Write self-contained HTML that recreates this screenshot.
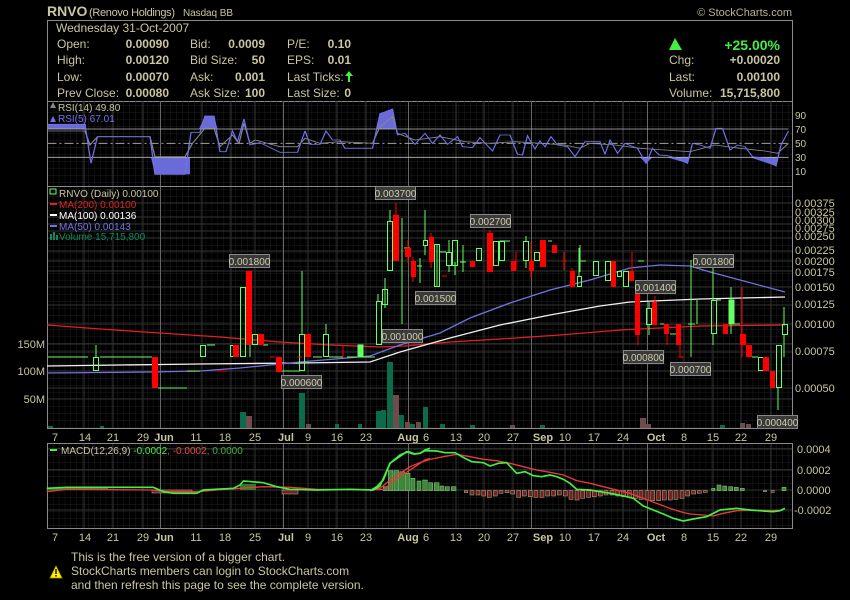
<!DOCTYPE html>
<html><head><meta charset="utf-8"><style>
html,body{margin:0;padding:0;background:#000;}
svg{display:block;font-family:"Liberation Sans",sans-serif;}
</style></head><body>
<svg width="850" height="600" viewBox="0 0 850 600" xmlns="http://www.w3.org/2000/svg">
<rect width="850" height="600" fill="#000"/>
<defs>
<pattern id="mg" x="47" y="0" width="5.88" height="7" patternUnits="userSpaceOnUse">
<path d="M0 0V7M0 0H5.88" stroke="#1d1d1d" stroke-width="1" fill="none"/>
</pattern>
</defs>

<!-- header -->
<text x="47" y="16" fill="#c9c6a0" font-size="14" font-weight="bold">RNVO</text>
<text x="89" y="16" fill="#c9c6a0" font-size="11" textLength="86">(Renovo Holdings)</text>
<text x="183" y="16" fill="#c9c6a0" font-size="10" textLength="50">Nasdaq BB</text>
<text x="792" y="16" fill="#b5b293" font-size="11" text-anchor="end">© StockCharts.com</text>
<rect x="47.5" y="20.5" width="745" height="81" fill="none" stroke="#8a8a8a"/>
<g fill="#c9c6a0" font-size="12">
<text x="56" y="32">Wednesday  31-Oct-2007</text>
<text x="57" y="48">Open:</text><text x="57" y="64">High:</text><text x="57" y="81">Low:</text><text x="57" y="97">Prev Close:</text>
<g font-weight="bold" text-anchor="end"><text x="169" y="48">0.00090</text><text x="169" y="64">0.00120</text><text x="169" y="81">0.00070</text><text x="169" y="97">0.00080</text>
<text x="265" y="48">0.0009</text><text x="265" y="64">50</text><text x="265" y="81">0.001</text><text x="265" y="97">100</text>
<text x="351" y="48">0.10</text><text x="351" y="64">0.01</text><text x="351" y="97">0</text>
<text x="780" y="64">+0.00020</text><text x="780" y="81">0.00100</text><text x="780" y="97">15,715,800</text></g>
<text x="190" y="48">Bid:</text><text x="190" y="64">Bid Size:</text><text x="190" y="81">Ask:</text><text x="190" y="97">Ask Size:</text>
<text x="287" y="48">P/E:</text><text x="287" y="64">EPS:</text><text x="287" y="81">Last Ticks:</text><text x="287" y="97">Last Size:</text>
<text x="669" y="64">Chg:</text><text x="669" y="81">Last:</text><text x="669" y="97">Volume:</text>
</g>
<path d="M349 71 L345 76 H348 V82 H350 V76 H353 Z" fill="#44ee44"/>
<path d="M669 50 L675 38 L682 50 Z" fill="#44ee44"/>
<text x="780" y="50" fill="#44ee44" font-size="14" font-weight="bold" text-anchor="end">+25.00%</text>

<!-- RSI panel -->
<rect x="47" y="101" width="745" height="85" fill="url(#mg)"/>
<g stroke="#3a3a3a"><path d="M84 101V186M113 101V186M143 101V186M202 101V186M231 101V186M255 101V186M308 101V186M337 101V186M366 101V186M456 101V186M484 101V186M513 101V186M565 101V186M594 101V186M623 101V186M684 101V186M713 101V186M741 101V186M771 101V186"/></g>
<g stroke="#666"><path d="M160.5 101V186M283.5 101V186M408.5 101V186M531.5 101V186M647.5 101V186"/></g>
<g transform="translate(40,95) scale(0.5,0.33333)">
<g fill="#6a6ad8"><path d="M15 88H92V102H15Z"/><path d="M222 187H300V238H230Z"/><path d="M318 102L330 63H348L355 102Z"/><path d="M672 102L680 56L705 42L712 102Z"/><path d="M1200 187L1212 205L1225 187Z"/><path d="M1255 187L1295 205L1300 187Z"/><path d="M1420 187L1472 213L1476 187Z"/><path d="M1347 102L1352 100H1365L1368 102Z"/></g>
<g stroke="#bbb" stroke-width="2.5" fill="none"><path d="M15 102H1497"/><path d="M15 187H1497"/><path d="M15 145H1497" stroke-dasharray="18 6 4 6"/></g>
<polyline fill="none" stroke="#888" stroke-width="2.5" points="15,108 90,108 100,150 115,125 220,125 230,185 290,185 305,145 330,100 348,100 360,155 385,120 398,145 408,85 420,145 430,135 480,155 515,155 530,130 560,145 600,140 665,145 680,95 705,65 715,115 750,135 800,125 850,140 900,145 950,140 1000,145 1050,150 1080,160 1100,145 1150,150 1200,160 1250,165 1300,170 1350,150 1400,160 1450,168 1475,175 1497,145"/>
<polyline fill="none" stroke="#7070e8" stroke-width="2.5" points="15,88 90,88 102,205 115,125 220,125 230,238 290,238 302,112 320,112 330,63 348,63 360,170 372,170 385,108 395,140 408,72 420,150 440,143 480,172 515,172 530,108 540,148 560,148 572,108 585,135 600,135 610,160 665,160 680,56 705,42 715,120 730,115 750,148 770,115 785,145 800,120 815,148 835,125 845,155 865,158 880,128 905,168 920,120 940,120 955,178 965,180 975,122 990,162 1000,138 1010,155 1022,125 1035,150 1055,155 1070,185 1090,140 1120,140 1130,178 1140,135 1155,175 1170,145 1195,160 1212,205 1225,160 1238,180 1255,182 1275,190 1295,205 1305,145 1320,150 1340,160 1352,100 1365,100 1380,165 1395,150 1410,155 1425,185 1450,190 1472,213 1482,150 1497,108"/>
</g>
<path d="M50 108L53 102L56 108Z" fill="#888"/><text x="58" y="111" fill="#c9c6a0" font-size="10">RSI(14) 49.80</text>
<path d="M50 122L53 116L56 122Z" fill="#7070e8"/><text x="58" y="122" fill="#7070e8" font-size="10">RSI(5) 67.01</text>
<g fill="#c9c6a0" font-size="10"><text x="795" y="119">90</text><text x="795" y="133">70</text><text x="795" y="147">50</text><text x="795" y="161">30</text><text x="795" y="175">10</text></g>

<!-- price panel -->
<rect x="47" y="186" width="745" height="242" fill="url(#mg)"/>
<g stroke="#333"><path d="M84 186V428M113 186V428M143 186V428M202 186V428M231 186V428M255 186V428M308 186V428M337 186V428M366 186V428M456 186V428M484 186V428M513 186V428M565 186V428M594 186V428M623 186V428M684 186V428M713 186V428M741 186V428M771 186V428"/>
<path d="M47 203H792M47 217H792M47 224H792M47 231H792M47 238H792M47 251H792M47 261H792M47 271H792M47 287H792M47 305H792M47 324H792M47 344H792M47 352H792M47 371H792M47 388H792M47 399H792"/></g>
<g stroke="#666"><path d="M160.5 186V428M283.5 186V428M408.5 186V428M531.5 186V428M647.5 186V428"/></g>
<path d="M47.5 101V428.5H792.5V101" fill="none" stroke="#8a8a8a"/>
<line x1="47" y1="186.5" x2="792" y2="186.5" stroke="#8a8a8a"/>

<!-- volume -->
<g fill="#0c6b4a"><rect x="48" y="426" width="5" height="2"/><rect x="100" y="426" width="4" height="2"/><rect x="240" y="412" width="6" height="16"/><rect x="299" y="393" width="6" height="35"/><rect x="335" y="424" width="4" height="4"/><rect x="358" y="424" width="4" height="4"/><rect x="376" y="411" width="5" height="17"/><rect x="381" y="410" width="5" height="18"/><rect x="387" y="362" width="6" height="66"/><rect x="399" y="415" width="5" height="13"/><rect x="423" y="407" width="5" height="21"/><rect x="410" y="424" width="5" height="4"/><rect x="440" y="424" width="5" height="4"/><rect x="470" y="425" width="5" height="3"/><rect x="540" y="425" width="5" height="3"/><rect x="720" y="425" width="5" height="3"/><rect x="775" y="423" width="5" height="5"/><rect x="782" y="424" width="5" height="4"/></g>
<g fill="#6e4c4c"><rect x="246" y="416" width="6" height="12"/><rect x="306" y="424" width="5" height="4"/><rect x="393" y="395" width="6" height="33"/><rect x="405" y="422" width="5" height="6"/><rect x="416" y="422" width="5" height="6"/><rect x="510" y="425" width="5" height="3"/><rect x="640" y="418" width="6" height="10"/><rect x="646" y="424" width="5" height="4"/><rect x="740" y="423" width="5" height="5"/><rect x="746" y="424" width="5" height="4"/><rect x="770" y="424" width="5" height="4"/></g>

<!-- moving averages -->
<polyline fill="none" stroke="#e02020" stroke-width="1.3" points="47,325 100,329 160,333 220,337 280,342 330,345 380,347 405,346 450,342 500,339 560,335 620,330 700,326 785,325"/>
<polyline fill="none" stroke="#f0f0f0" stroke-width="1.3" points="47,366 120,365 200,364 300,363 370,362 385,357 400,352 450,338 500,325 550,315 600,306 630,302 700,299 785,297"/>
<polyline fill="none" stroke="#7272e0" stroke-width="1.3" points="47,373 150,372 200,371 240,368 300,362 370,356 400,345 440,333 470,318 510,303 550,290 590,280 630,268 660,265 690,266 710,272 740,280 785,292"/>

<!-- candles -->
<g stroke="#66ff66" fill="none" stroke-width="1">
<path d="M48 357H88M100 357H152M158 388H187M187 371H200M207 345H215M263 345H268M282 371H300M313 357H322M329 357H343M347 357H357M363 357H375M404 248H410M417 266H422M440 252H446M460 262H466M500 241H510M548 241H552M580 261H586M638 261H644M660 324H664M670 334H676M688 324H695M716 300H721M734 324H740M752 357H758"/>
<path d="M96 345V357M96 371V371M250 345V357M302 271V334M326 324V334M378 294V301M385 278V308M390 210V221M402 218V324M420 258V283M425 210V240M425 245V255M437 244V287M449 240V252M449 266V272M455 262V275M463 245V272M526 236V241M526 261V268M580 245V272M579 248V276M649 302V308M649 325V335M691 260V357M697 300V324M713 261V300M713 334V345M731 287V300M731 324V334M778 388V410M784 307V324M784 334V357"/>
<rect x="93.5" y="357.5" width="5" height="13"/><rect x="200.5" y="345.5" width="5" height="11"/><rect x="230.5" y="345.5" width="3" height="11"/><rect x="240.5" y="287.5" width="5" height="69"/><rect x="252.5" y="334.5" width="5" height="10"/><rect x="299.5" y="334.5" width="5" height="36"/><rect x="323.5" y="334.5" width="5" height="22"/><rect x="376.5" y="301.5" width="5" height="43"/><rect x="382.5" y="289.5" width="5" height="15"/><rect x="387.5" y="221.5" width="5" height="49"/><rect x="423.5" y="240.5" width="4" height="5"/><rect x="434.5" y="244.5" width="5" height="42"/><rect x="446.5" y="252.5" width="5" height="13"/><rect x="452.5" y="240.5" width="5" height="25"/><rect x="476.5" y="248.5" width="5" height="12"/><rect x="493.5" y="241.5" width="5" height="24"/><rect x="499.5" y="241.5" width="5" height="19"/><rect x="523.5" y="241.5" width="5" height="19"/><rect x="534.5" y="252.5" width="5" height="8"/><rect x="577.5" y="276.5" width="4" height="10"/><rect x="593.5" y="261.5" width="5" height="14"/><rect x="605.5" y="261.5" width="5" height="19"/><rect x="617.5" y="271.5" width="4" height="5"/><rect x="623.5" y="271.5" width="5" height="15"/><rect x="646.5" y="308.5" width="5" height="16"/><rect x="711.5" y="300.5" width="5" height="33"/><rect x="758.5" y="357.5" width="5" height="13"/><rect x="776.5" y="345.5" width="5" height="42"/><rect x="782.5" y="324.5" width="5" height="10"/>
<rect x="358" y="345" width="5" height="12" fill="#66ff66"/><rect x="729" y="300" width="5" height="24" fill="#66ff66"/>
</g>
<g fill="#ff0000" stroke="#ff0000" stroke-width="1">
<path d="M218 371H227M270 357H275M297 357H302M343 345V357M396 203V215M408 240V263M413 257V282M431 233V268M442 276H447M473 270V270M490 230V233M516 252V270M531 242V278M562 261H567M564 252V270M572 268V271M632 252V271M638 335V345M655 296V302M667 334V345M680 345V357M679 357H684M742 287V357M745 334V345"/>
<rect x="152.5" y="357.5" width="5" height="30"/><rect x="233.5" y="345.5" width="5" height="11"/><rect x="246.5" y="271.5" width="5" height="73"/><rect x="258.5" y="334.5" width="5" height="10"/><rect x="276.5" y="357.5" width="5" height="14"/><rect x="305.5" y="334.5" width="5" height="22"/><rect x="393.5" y="215.5" width="5" height="45"/><rect x="405.5" y="248.5" width="5" height="8"/><rect x="411.5" y="261.5" width="4" height="15"/><rect x="429.5" y="237.5" width="4" height="24"/><rect x="470.5" y="261.5" width="4" height="5"/><rect x="487.5" y="233.5" width="5" height="38"/><rect x="511.5" y="261.5" width="4" height="9"/><rect x="529.5" y="261.5" width="4" height="9"/><rect x="540.5" y="240.5" width="5" height="26"/><rect x="552.5" y="245.5" width="4" height="7"/><rect x="570.5" y="271.5" width="4" height="15"/><rect x="611.5" y="261.5" width="4" height="25"/><rect x="629.5" y="271.5" width="4" height="9"/><rect x="635.5" y="288.5" width="4" height="46"/><rect x="652.5" y="302.5" width="4" height="22"/><rect x="664.5" y="324.5" width="4" height="9"/><rect x="676.5" y="324.5" width="4" height="20"/><rect x="723.5" y="324.5" width="4" height="9"/><rect x="740.5" y="334.5" width="5" height="10"/><rect x="746.5" y="345.5" width="5" height="11"/><rect x="763.5" y="357.5" width="5" height="13"/><rect x="770.5" y="371.5" width="4" height="16"/>
</g>

<!-- price tags -->
<g font-size="10" fill="#d0cda8" text-anchor="middle">
<g fill="#3a3a3a" stroke="#888" stroke-width="1"><rect x="229.5" y="254.5" width="40" height="13"/><rect x="375.5" y="186.5" width="40" height="13"/><rect x="470.5" y="214.5" width="40" height="13"/><rect x="415.5" y="291.5" width="40" height="13"/><rect x="382.5" y="329.5" width="40" height="13"/><rect x="281.5" y="375.5" width="40" height="13"/><rect x="623.5" y="350.5" width="40" height="13"/><rect x="670.5" y="362.5" width="40" height="13"/><rect x="635.5" y="280.5" width="40" height="13"/><rect x="693.5" y="254.5" width="40" height="13"/><rect x="757.5" y="415.5" width="40" height="13"/></g>
<text x="249.5" y="265">0.001800</text><text x="395.5" y="197">0.003700</text><text x="490.5" y="225">0.002700</text><text x="435.5" y="302">0.001500</text><text x="402.5" y="340">0.001000</text><text x="301.5" y="386">0.000600</text><text x="643.5" y="361">0.000800</text><text x="690.5" y="373">0.000700</text><text x="655.5" y="291">0.001400</text><text x="713.5" y="265">0.001800</text><text x="777.5" y="426">0.000400</text>
</g>

<!-- price panel legend -->
<g font-size="10">
<rect x="50" y="189" width="6" height="5" fill="none" stroke="#66ff66"/><text x="59" y="197" fill="#c9c6a0">RNVO (Daily) 0.00100</text>
<line x1="50" y1="204" x2="57" y2="204" stroke="#e02020" stroke-width="2"/><text x="59" y="208" fill="#e02020">MA(200) 0.00100</text>
<line x1="50" y1="215" x2="57" y2="215" stroke="#fff" stroke-width="2"/><text x="59" y="219" fill="#fff">MA(100) 0.00136</text>
<line x1="50" y1="226" x2="57" y2="226" stroke="#7272e0" stroke-width="2"/><text x="59" y="230" fill="#7272e0">MA(50) 0.00143</text>
<path d="M50 240V234H52V240M53 240V232H55V240M56 240V235H58V240" fill="#0c8b5a"/><text x="59" y="240" fill="#0c8b5a">Volume 15,715,800</text>
</g>
<g fill="#c9c6a0" font-size="11">
<text x="795" y="207">0.00375</text><text x="795" y="216">0.00325</text><text x="795" y="224">0.00300</text><text x="795" y="232">0.00275</text><text x="795" y="240">0.00250</text><text x="795" y="254">0.00225</text><text x="795" y="265">0.00200</text><text x="795" y="276">0.00175</text><text x="795" y="291">0.00150</text><text x="795" y="308">0.00125</text><text x="795" y="328">0.00100</text><text x="795" y="355">0.00075</text><text x="795" y="392">0.00050</text>
<text x="45" y="348" text-anchor="end" font-size="11">150M</text><text x="45" y="375" text-anchor="end" font-size="11">100M</text><text x="45" y="403" text-anchor="end" font-size="11">50M</text>
</g>

<!-- date labels -->
<g fill="#c9c6a0" font-size="11" text-anchor="middle">
<g id="d1"><text x="55" y="441">7</text><text x="85" y="441">14</text><text x="113" y="441">21</text><text x="143" y="441">29</text><text x="164" y="441" font-weight="bold">Jun</text><text x="196" y="441">11</text><text x="225" y="441">18</text><text x="255" y="441">25</text><text x="286" y="441" font-weight="bold">Jul</text><text x="308" y="441">9</text><text x="337" y="441">16</text><text x="366" y="441">23</text><text x="408" y="441" font-weight="bold">Aug</text><text x="426" y="441">6</text><text x="456" y="441">13</text><text x="484" y="441">20</text><text x="513" y="441">27</text><text x="543" y="441" font-weight="bold">Sep</text><text x="565" y="441">10</text><text x="594" y="441">17</text><text x="623" y="441">24</text><text x="656" y="441" font-weight="bold">Oct</text><text x="684" y="441">8</text><text x="713" y="441">15</text><text x="741" y="441">22</text><text x="771" y="441">29</text></g>
<use href="#d1" y="100"/>
</g>

<!-- MACD panel -->
<rect x="47" y="443" width="745" height="85" fill="url(#mg)"/>
<g stroke="#333"><path d="M84 443V528M113 443V528M143 443V528M202 443V528M231 443V528M255 443V528M308 443V528M337 443V528M366 443V528M456 443V528M484 443V528M513 443V528M565 443V528M594 443V528M623 443V528M684 443V528M713 443V528M741 443V528M771 443V528M47 449H792M47 470H792M47 490H792M47 510H792"/></g>
<g stroke="#666"><path d="M160.5 443V528M283.5 443V528M408.5 443V528M531.5 443V528M647.5 443V528"/></g>
<rect x="47.5" y="443.5" width="745" height="85" fill="none" stroke="#8a8a8a"/>
<g fill="#2f7a2f"><rect x="48" y="488" width="60" height="2"/><rect x="240" y="484" width="16" height="6"/></g>
<g fill="#6e2626" stroke="#bfb990" stroke-width="0.5"><rect x="152" y="490" width="40" height="3"/><rect x="282" y="490" width="16" height="4"/></g>
<g transform="translate(370,440) scale(0.33333)">
<g fill="#3a8a3a" stroke="#9ad08a" stroke-width="1.5">
<rect x="40" y="140" width="12" height="12"/><rect x="55" y="92" width="14" height="60"/><rect x="72" y="92" width="14" height="60"/><rect x="89" y="95" width="14" height="57"/><rect x="106" y="100" width="14" height="52"/><rect x="123" y="115" width="12" height="37"/><rect x="141" y="123" width="12" height="29"/><rect x="158" y="120" width="14" height="32"/><rect x="176" y="128" width="12" height="24"/><rect x="193" y="128" width="14" height="24"/><rect x="210" y="138" width="12" height="14"/><rect x="226" y="140" width="12" height="12"/><rect x="244" y="140" width="14" height="12"/>
<rect x="1025" y="145" width="10" height="7"/><rect x="1041" y="135" width="12" height="17"/><rect x="1058" y="138" width="12" height="14"/><rect x="1076" y="140" width="12" height="12"/><rect x="1093" y="142" width="12" height="10"/><rect x="1111" y="145" width="12" height="7"/><rect x="1236" y="142" width="12" height="10"/>
</g>
<g fill="#7a2020" stroke="#bfb990" stroke-width="1.5">
<rect x="283" y="152" width="10" height="6"/><rect x="300" y="152" width="12" height="13"/><rect x="318" y="152" width="12" height="13"/><rect x="335" y="152" width="12" height="16"/><rect x="352" y="152" width="12" height="20"/><rect x="370" y="152" width="12" height="16"/><rect x="387" y="152" width="12" height="8"/><rect x="405" y="152" width="12" height="6"/><rect x="422" y="152" width="12" height="10"/><rect x="440" y="152" width="12" height="20"/><rect x="457" y="152" width="12" height="16"/><rect x="475" y="152" width="12" height="18"/><rect x="492" y="152" width="12" height="20"/><rect x="510" y="152" width="12" height="20"/><rect x="527" y="152" width="12" height="16"/><rect x="545" y="152" width="12" height="16"/><rect x="562" y="152" width="12" height="13"/><rect x="580" y="152" width="12" height="16"/><rect x="597" y="152" width="12" height="26"/><rect x="615" y="152" width="12" height="28"/><rect x="632" y="152" width="12" height="23"/><rect x="650" y="152" width="12" height="20"/><rect x="667" y="152" width="12" height="18"/><rect x="685" y="152" width="12" height="16"/><rect x="702" y="152" width="12" height="13"/><rect x="720" y="152" width="12" height="13"/><rect x="737" y="152" width="12" height="16"/><rect x="755" y="152" width="12" height="18"/><rect x="772" y="152" width="12" height="20"/><rect x="790" y="152" width="12" height="23"/><rect x="807" y="152" width="12" height="26"/><rect x="825" y="152" width="12" height="28"/><rect x="842" y="152" width="12" height="30"/><rect x="860" y="152" width="12" height="30"/><rect x="877" y="152" width="12" height="28"/><rect x="895" y="152" width="12" height="28"/><rect x="912" y="152" width="12" height="26"/><rect x="930" y="152" width="12" height="23"/><rect x="947" y="152" width="12" height="16"/><rect x="965" y="152" width="12" height="10"/><rect x="982" y="152" width="12" height="8"/><rect x="1000" y="152" width="12" height="5"/><rect x="1180" y="152" width="10" height="3"/><rect x="1203" y="152" width="10" height="5"/>
</g>
<polyline fill="none" stroke="#e83a3a" stroke-width="4" points="0,152 30,145 60,120 90,100 120,80 150,68 180,58 220,50 260,43 300,50 340,58 380,62 420,70 460,80 500,90 540,97 580,105 620,122 660,130 700,140 740,150 780,160 820,175 860,190 900,205 930,215 960,222 1000,225 1030,228 1060,220 1100,212 1150,210 1200,212 1240,210"/>
<polyline fill="none" stroke="#44ee44" stroke-width="5" points="0,152 20,140 40,120 60,70 90,45 115,35 135,42 150,40 165,32 200,33 225,38 255,38 285,55 305,65 340,68 360,78 385,70 410,68 440,100 465,95 490,107 515,110 540,105 560,110 580,118 600,130 620,148 660,150 690,155 720,160 760,168 790,175 820,198 850,210 880,222 910,235 940,243 970,237 1010,230 1050,210 1100,205 1140,210 1180,213 1210,215 1230,212 1245,205"/>
</g>
<g transform="translate(0,430) scale(0.33333)">
<polyline fill="none" stroke="#e83a3a" stroke-width="4" points="140,185 200,178 460,180 500,185 590,185 650,180 720,175 790,170 870,172 950,178 1100,180 1150,178 1200,140 1275,90 1290,85"/>
<polyline fill="none" stroke="#44ee44" stroke-width="5" points="140,175 200,172 460,172 490,185 520,190 590,190 610,180 700,175 720,165 730,153 790,158 830,170 870,178 950,180 1050,178 1120,180 1140,168 1170,100 1220,65 1240,72 1260,70 1275,60 1290,55"/>
</g>
<line x1="50" y1="450" x2="57" y2="450" stroke="#44ee44" stroke-width="2"/>
<text x="61" y="454" font-size="10" fill="#c9c6a0">MACD(12,26,9) <tspan fill="#44ee44">-0.0002</tspan><tspan fill="#e84a4a">, -0.0002</tspan><tspan fill="#3fae3f">, 0.0000</tspan></text>
<g fill="#c9c6a0" font-size="11"><text x="797" y="453">0.0004</text><text x="797" y="474">0.0002</text><text x="797" y="494">0.0000</text><text x="794" y="514">-0.0002</text></g>

<!-- footer -->
<path d="M50 578L56 566L62 578Z" fill="#ffee00" stroke="#aa9900" stroke-width="0.8"/>
<rect x="55.3" y="569" width="1.4" height="5" fill="#000"/><rect x="55.3" y="575" width="1.4" height="1.5" fill="#000"/>
<g fill="#c9c6a0" font-size="12"><text x="71" y="561">This is the free version of a bigger chart.</text><text x="71" y="575">StockCharts members can login to StockCharts.com</text><text x="71" y="589">and then refresh this page to see the complete version.</text></g>
</svg>
</body></html>
